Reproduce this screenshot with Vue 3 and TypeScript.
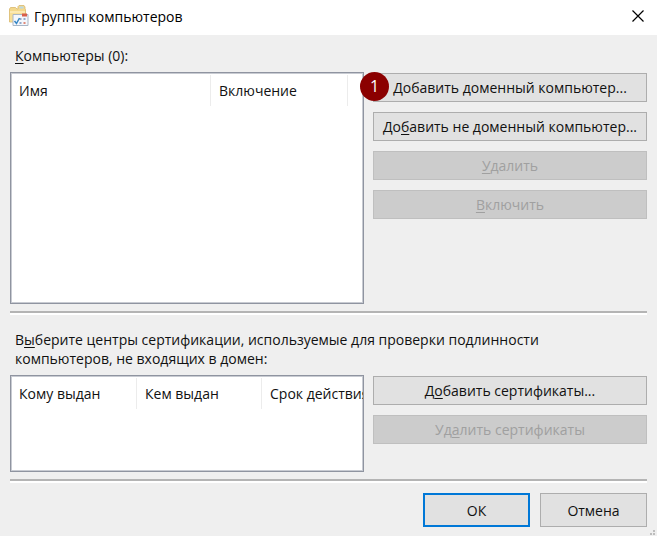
<script setup lang="ts">
interface Column {
  title: string
  width: number
}

const computerColumns: Column[] = [
  { title: 'Имя', width: 200 },
  { title: 'Включение', width: 137 },
]

const certificateColumns: Column[] = [
  { title: 'Кому выдан', width: 126 },
  { title: 'Кем выдан', width: 125 },
  { title: 'Срок действия', width: 125 },
]
</script>

<template>
  <main class="dialog">
    <header class="titlebar">
      <svg class="app-icon" viewBox="0 0 22 22" aria-hidden="true">
        <path d="M1.500 4 2.500 2.500h5L9 4h1V1.500L11 .5h5l1 1.500v2l.5.5V17h-16z" fill="#f3d88c" stroke="#d9b96c" stroke-width=".8" />
        <path d="M11.500 1.500h4v2h-4z" fill="#b8d9e6" />
        <path d="M2 6h15v10.500H2z" fill="#f8df96" />
        <path d="M2 6h15v2H2z" fill="#fbe9b2" />
        <path d="M5 9.500h15v11H5z" fill="#f4f7fc" stroke="#a9b6c6" />
        <path d="M14 8.500h5v3h-5z" fill="#d85f4b" />
        <path d="M11.500 13h2v2h-2zM15.500 13h2v2h-2zM11.500 17h2v2h-2z" fill="#93a9c8" />
        <path d="M15.500 17h2v2h-2z" fill="#e08878" />
        <path d="m6.500 16 2 2.500 3-5.500" fill="none" stroke="#3586c4" stroke-width="1.500" />
      </svg>
      <h1 class="title">Группы компьютеров</h1>
      <button class="close" type="button" aria-label="Закрыть">
        <svg viewBox="0 0 12 12" aria-hidden="true"><path d="m.5.5 11 11m0-11-11 11" stroke="#000" stroke-width="1.200" /></svg>
      </button>
    </header>

    <div class="content">
      <section class="group computers">
        <p id="computers-label" class="caption"><u>К</u>омпьютеры (0):</p>
        <div class="list tall">
          <table aria-labelledby="computers-label">
            <colgroup>
              <col v-for="c in computerColumns" :key="c.title" :style="{ width: c.width + 'px' }" />
            </colgroup>
            <thead>
              <tr><th v-for="c in computerColumns" :key="c.title" scope="col">{{ c.title }}</th></tr>
            </thead>
          </table>
        </div>
        <div class="actions">
          <button class="btn" type="button"><span class="badge">1</span><span><u>Д</u>обавить доменный компьютер...</span></button>
          <button class="btn" type="button"><span>До<u>б</u>авить не доменный компьютер...</span></button>
          <button class="btn" type="button" disabled><span><u>У</u>далить</span></button>
          <button class="btn" type="button" disabled><span><u>В</u>ключить</span></button>
        </div>
      </section>

      <hr />

      <section class="group certificates">
        <p id="certificates-label" class="caption">
          В<u>ы</u>берите центры сертификации, используемые для проверки подлинности<br />компьютеров, не входящих в домен:
        </p>
        <div class="list short">
          <table aria-labelledby="certificates-label">
            <colgroup>
              <col v-for="c in certificateColumns" :key="c.title" :style="{ width: c.width + 'px' }" />
            </colgroup>
            <thead>
              <tr><th v-for="c in certificateColumns" :key="c.title" scope="col">{{ c.title }}</th></tr>
            </thead>
          </table>
        </div>
        <div class="actions">
          <button class="btn" type="button"><span>Д<u>о</u>бавить сертификаты...</span></button>
          <button class="btn" type="button" disabled><span>Уд<u>а</u>лить сертификаты</span></button>
        </div>
      </section>

      <hr />

      <footer class="footer">
        <button class="btn primary" type="button">ОК</button>
        <button class="btn" type="button">Отмена</button>
      </footer>
    </div>
    <svg class="grip" viewBox="0 0 6 6" aria-hidden="true">
      <path d="M4 0h2v2H4zM4 3h2v2H4zM1 3h2v2H1z" fill="#bdbdbd" />
    </svg>
  </main>
</template>

<style>
body {
  margin: 0;
  background: #efefef;
}
</style>

<style scoped>
.dialog {
  position: relative;
  box-sizing: border-box;
  min-height: 100vh;
  background: #efefef;
  color: #111;
  font: 14px/19px "Open Sans", "Noto Sans", sans-serif;
}
.titlebar {
  display: flex;
  align-items: center;
  box-sizing: border-box;
  height: 35px;
  padding: 0 12px 3px 8px;
  background: #fff;
}
.app-icon {
  width: 22px;
  height: 22px;
}
.title {
  flex: 1;
  margin: 0 0 0 4px;
  font-size: 14px;
  font-weight: 400;
  color: #000;
}
.close {
  display: flex;
  padding: 1px;
  border: 0;
  background: none;
}
.close svg {
  width: 12px;
  height: 12px;
}
.content {
  padding: 11px 10px 9px;
}
.group {
  display: grid;
  grid-template-columns: minmax(0, 1fr) 274px;
  column-gap: 9px;
}
.caption {
  grid-column: 1 / -1;
  margin: 0 0 7px 5px;
}
u {
  text-decoration-thickness: 1px;
  text-underline-offset: 2px;
}
.list {
  box-sizing: border-box;
  overflow: hidden;
  border: 1px solid #8f94a0;
  background: #fff;
  box-shadow: inset 0 0 0 1px #c8cbd2;
}
.tall {
  min-height: 232px;
}
.short {
  min-height: 97px;
}
table {
  width: 0;
  table-layout: fixed;
  border-collapse: separate;
  border-spacing: 0;
  margin-top: 2px;
}
th {
  box-sizing: border-box;
  height: 31px;
  padding: 0 0 0 8px;
  border-right: 1px solid #ececec;
  font-weight: 400;
  text-align: left;
  white-space: nowrap;
}
.actions {
  display: flex;
  flex-direction: column;
  gap: 10px;
  padding-top: 1px;
}
.btn {
  position: relative;
  box-sizing: border-box;
  height: 29px;
  padding: 0;
  border: 1px solid #adadad;
  background: #e1e1e1;
  color: #111;
  font: inherit;
  white-space: nowrap;
}
.btn:disabled {
  border-color: #bfbfbf;
  background: #ccc;
  color: #a0a0a0;
}
.badge {
  position: absolute;
  top: -2px;
  left: -14px;
  width: 29px;
  height: 29px;
  border-radius: 50%;
  background: #8b0000;
  color: #fff;
  font-size: 16px;
  line-height: 28px;
  text-align: center;
}
hr {
  height: 2px;
  margin: 7px 0 0;
  border: 0;
  border-bottom: 2px solid #fff;
  background: #b4b4b4;
}
.certificates {
  padding-top: 15px;
}
.footer {
  display: flex;
  justify-content: flex-end;
  gap: 10px;
  padding-top: 10px;
}
.footer .btn {
  width: 107px;
  height: 34px;
}
.footer .primary {
  border: 2px solid #0078d7;
}
.grip {
  position: absolute;
  right: 2px;
  bottom: 0;
  width: 6px;
  height: 6px;
}
</style>
